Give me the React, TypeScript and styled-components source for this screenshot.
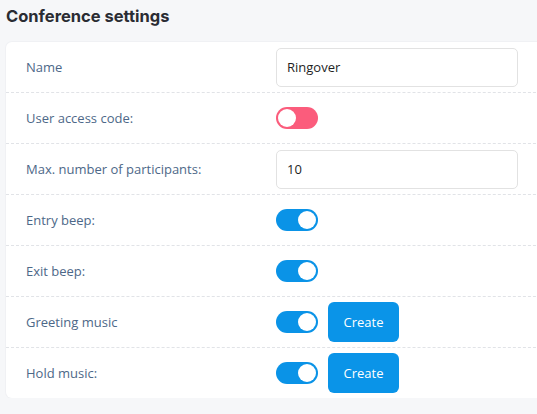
import { createGlobalStyle } from "styled-components";
import styled from "styled-components";

const GlobalStyle = createGlobalStyle`
	body {
		margin: 0;
		background: #f6f7f9;
		font-family: "Open Sans", sans-serif;
		overflow: hidden;
	}
`;

type Setting = {
	label: string;
	kind: "input" | "toggle";
	value?: string;
	on?: boolean;
	action?: string;
};

const settings: Setting[] = [
	{ label: "Name", kind: "input", value: "Ringover" },
	{ label: "User access code:", kind: "toggle", on: false },
	{ label: "Max. number of participants:", kind: "input", value: "10" },
	{ label: "Entry beep:", kind: "toggle", on: true },
	{ label: "Exit beep:", kind: "toggle", on: true },
	{ label: "Greeting music", kind: "toggle", on: true, action: "Create" },
	{ label: "Hold music:", kind: "toggle", on: true, action: "Create" },
];

const App = () => {
	return (
		<Page>
			<GlobalStyle />
			<Title>Conference settings</Title>
			<Card>
				{settings.map((s) => (
					<Row key={s.label}>
						<Label>{s.label}</Label>
						<Control>
							{s.kind === "input" ? (
								<TextInput defaultValue={s.value} />
							) : (
								<Toggle $on={!!s.on}>
									<span />
								</Toggle>
							)}
							{s.action && <CreateButton>{s.action}</CreateButton>}
						</Control>
					</Row>
				))}
			</Card>
		</Page>
	);
};

export default App;

const Page = styled.div`
	padding: 4px 0 0 6px;
	width: 537px;
	box-sizing: border-box;
`;

const Title = styled.h1`
	margin: 0 0 14px;
	font-family: "Inter", sans-serif;
	font-size: 16.5px;
	line-height: 24px;
	font-weight: 700;
	color: #2a2c33;
`;

const Card = styled.div`
	width: 545px;
	background: #ffffff;
	border-radius: 6px;
	box-shadow: 0 0 0 1px #f0f1f4;
`;

const Row = styled.div`
	display: grid;
	grid-template-columns: 250px 1fr;
	align-items: center;
	height: 51px;
	padding-left: 20px;
	box-sizing: border-box;
	border-bottom: 1px dashed #e1e3e7;
	&:last-child {
		border-bottom: none;
		height: 50px;
	}
`;

const Label = styled.div`
	font-size: 13px;
	color: #4d6888;
`;

const Control = styled.div`
	display: flex;
	align-items: center;
	gap: 10px;
`;

const TextInput = styled.input`
	width: 242px;
	height: 39px;
	box-sizing: border-box;
	border: 1px solid #e2e2e2;
	border-radius: 5px;
	padding: 0 10px;
	font-family: "Open Sans", sans-serif;
	font-size: 13px;
	color: #1f1f1f;
	outline: none;
`;

const Toggle = styled.div<{ $on: boolean }>`
	width: 42px;
	height: 22px;
	border-radius: 11px;
	background: ${(p) => (p.$on ? "#0a93e7" : "#fb5c7c")};
	display: flex;
	align-items: center;
	justify-content: ${(p) => (p.$on ? "flex-end" : "flex-start")};
	padding: 0 2px;
	box-sizing: border-box;
	span {
		width: 18px;
		height: 18px;
		border-radius: 50%;
		background: #ffffff;
	}
`;

const CreateButton = styled.button`
	width: 71px;
	height: 40px;
	border: none;
	border-radius: 6px;
	background: #0a94e8;
	color: #ffffff;
	font-family: "Open Sans", sans-serif;
	font-size: 13px;
	cursor: pointer;
`;
